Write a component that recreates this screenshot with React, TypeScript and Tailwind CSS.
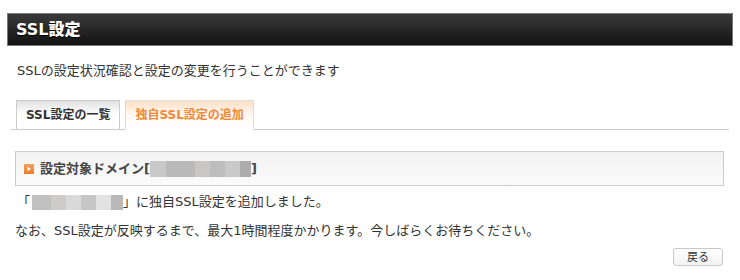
const FONT = "font-['DejaVu_Sans','Noto_Sans_CJK_JP',sans-serif]";

function Mosaic({ cells, height }: { cells: [number, string][]; height: string }) {
  return (
    <span className={`inline-flex align-middle ${height}`}>
      {cells.map(([w, c], i) => (
        <span key={i} className="h-full" style={{ width: w, background: c }} />
      ))}
    </span>
  );
}

export default function App() {
  return (
    <div className={`min-h-[280px] w-[740px] bg-white text-[#333] ${FONT}`}>
      <div className="px-[7px] pt-[13px]">
        {/* title bar */}
        <div className="flex h-[33px] items-center border border-[#7a7a7a] bg-linear-to-b from-[#3b3b3b] to-[#131313] pl-[8px]">
          <h1 className="text-[16px] font-black leading-none text-white [text-shadow:0_1px_1px_#000]">SSL設定</h1>
        </div>

        <p className="mt-[15px] pl-[10px] text-[13px] leading-[20px]">SSLの設定状況確認と設定の変更を行うことができます</p>

        {/* tabs */}
        <div className="mx-[4px] mt-[19px] flex items-end gap-[5px] border-b border-[#cccccc] pl-[5px]">
          <div className="-mb-px flex h-[30px] items-center border border-[#cccccc] bg-linear-to-b from-[#e2e2e2] via-white to-white px-[9px] text-[12px] font-bold text-[#333]">
            SSL設定の一覧
          </div>
          <div className="-mb-px flex h-[30px] items-center border border-b-white border-[#dddddd] bg-linear-to-b from-[#fde0c6] via-[#fff8f2] to-white px-[9px] text-[12px] font-bold text-[#f0893a]">
            独自SSL設定の追加
          </div>
        </div>

        {/* domain box */}
        <div className="mt-[21px] ml-[8px] mr-[9px] flex h-[35px] items-center border border-[#cccccc] bg-linear-to-b from-[#f2f2f2] to-[#fbfbfb] pl-[8px]">
          <span className="mr-[6px] flex h-[10px] w-[10px] items-center justify-center bg-linear-to-b from-[#f7a45a] to-[#e97a24]">
            <svg width="6" height="6" viewBox="0 0 6 6">
              <path d="M1.5 0.8 L5 3 L1.5 5.2 Z" fill="#fff" />
            </svg>
          </span>
          <span className="flex items-center text-[13px] font-bold text-[#444]">
            設定対象ドメイン[
            <Mosaic
              height="h-[16px]"
              cells={[
                [16, '#c9c9c9'],
                [29, '#b9b9b9'],
                [15, '#c9c7c5'],
                [15, '#bdbdbd'],
                [15, '#c9c9c9'],
                [11, '#acacac'],
              ]}
            />
            ]
          </span>
        </div>

        <p className="mt-[6px] flex items-center pl-[10px] text-[13px] leading-[20px]">
          「
          <Mosaic
            height="h-[15px]"
            cells={[
              [2, '#fff'],
              [19, '#c1c1c1'],
              [15, '#cfcbca'],
              [15, '#d9d9d9'],
              [15, '#c6c6c6'],
              [15, '#e2e2e2'],
              [12, '#b9b9b9'],
            ]}
          />
          」に独自SSL設定を追加しました。
        </p>
        <p className="mt-[9px] pl-[8px] text-[13px] leading-[20px]">
          なお、SSL設定が反映するまで、最大1時間程度かかります。今しばらくお待ちください。
        </p>

        <div className="mt-[7px] mr-[10px] flex justify-end">
          <button
            type="button"
            className="flex h-[18px] w-[50px] items-center justify-center rounded-[3px] border border-[#c8c8c8] bg-linear-to-b from-white to-[#f3f3f3] text-[11px] leading-none text-[#333]"
          >
            戻る
          </button>
        </div>
      </div>
    </div>
  );
}
